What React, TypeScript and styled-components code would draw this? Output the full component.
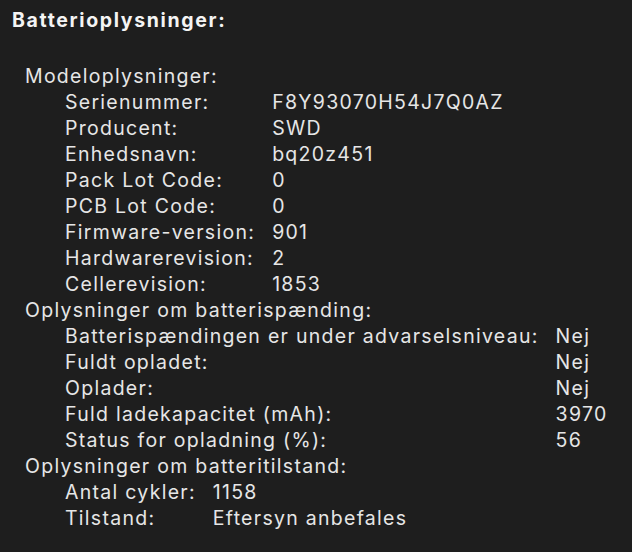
import { Fragment } from 'react';
import styled, { createGlobalStyle } from 'styled-components';

const GlobalStyle = createGlobalStyle`
  html, body {
    margin: 0;
    padding: 0;
    background: #1e1e1e;
  }
  body {
    font-family: Inter, "Liberation Sans", sans-serif;
    color: #e6e6e6;
    -webkit-font-smoothing: antialiased;
  }
`;

const Page = styled.div`
  width: 632px;
  height: 552px;
  background: #1e1e1e;
  padding: 7px 0 0 12px;
  box-sizing: border-box;
  overflow: hidden;
`;

const Title = styled.h1`
  margin: 0 0 30px 0;
  font-size: 19.5px;
  line-height: 26px;
  font-weight: 700;
  letter-spacing: 1.65px;
  color: #f4f4f4;
`;

const Section = styled.div`
  padding-left: 13px;
  font-size: 19.5px;
  line-height: 26px;
  letter-spacing: 1.28px;
`;

const SectionTitle = styled.div``;

const Grid = styled.div`
  display: grid;
  grid-template-columns: max-content max-content;
  column-gap: 17px;
  padding-left: 40px;
`;

const Label = styled.div``;
const Value = styled.div``;

type Row = [string, string];

const sections: { title: string; rows: Row[] }[] = [
  {
    title: 'Modeloplysninger:',
    rows: [
      ['Serienummer:', 'F8Y93070H54J7Q0AZ'],
      ['Producent:', 'SWD'],
      ['Enhedsnavn:', 'bq20z451'],
      ['Pack Lot Code:', '0'],
      ['PCB Lot Code:', '0'],
      ['Firmware-version:', '901'],
      ['Hardwarerevision:', '2'],
      ['Cellerevision:', '1853'],
    ],
  },
  {
    title: 'Oplysninger om batterispænding:',
    rows: [
      ['Batterispændingen er under advarselsniveau:', 'Nej'],
      ['Fuldt opladet:', 'Nej'],
      ['Oplader:', 'Nej'],
      ['Fuld ladekapacitet (mAh):', '3970'],
      ['Status for opladning (%):', '56'],
    ],
  },
  {
    title: 'Oplysninger om batteritilstand:',
    rows: [
      ['Antal cykler:', '1158'],
      ['Tilstand:', 'Eftersyn anbefales'],
    ],
  },
];

export default function App() {
  return (
    <>
      <GlobalStyle />
      <Page>
        <Title>Batterioplysninger:</Title>
        {sections.map((s) => (
          <Section key={s.title}>
            <SectionTitle>{s.title}</SectionTitle>
            <Grid>
              {s.rows.map(([l, v]) => (
                <Fragment key={l}>
                  <Label>{l}</Label>
                  <Value>{v}</Value>
                </Fragment>
              ))}
            </Grid>
          </Section>
        ))}
      </Page>
    </>
  );
}
